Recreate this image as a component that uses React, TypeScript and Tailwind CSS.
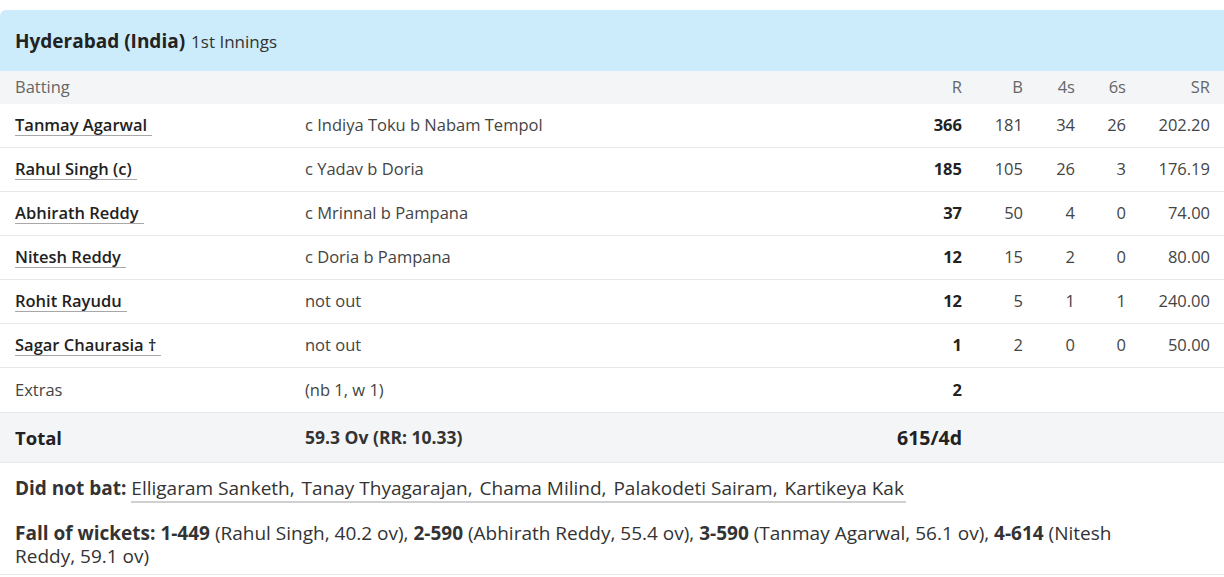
import React from "react";

const rows = [
  { name: "Tanmay Agarwal", how: "c Indiya Toku b Nabam Tempol", r: "366", b: "181", f: "34", s: "26", sr: "202.20" },
  { name: "Rahul Singh (c)", how: "c Yadav b Doria", r: "185", b: "105", f: "26", s: "3", sr: "176.19" },
  { name: "Abhirath Reddy", how: "c Mrinnal b Pampana", r: "37", b: "50", f: "4", s: "0", sr: "74.00" },
  { name: "Nitesh Reddy", how: "c Doria b Pampana", r: "12", b: "15", f: "2", s: "0", sr: "80.00" },
  { name: "Rohit Rayudu", how: "not out", r: "12", b: "5", f: "1", s: "1", sr: "240.00" },
  { name: "Sagar Chaurasia †", how: "not out", r: "1", b: "2", f: "0", s: "0", sr: "50.00" },
];

const dnb = ["Elligaram Sanketh", "Tanay Thyagarajan", "Chama Milind", "Palakodeti Sairam", "Kartikeya Kak"];

function Grid({ children, className = "" }: { children: React.ReactNode; className?: string }) {
  return (
    <div className={"grid grid-cols-[290px_1fr_92px_61px_52px_51px_84px] items-center pl-[15px] pr-[14px] " + className}>
      {children}
    </div>
  );
}

export default function App() {
  return (
    <div className="min-h-[577px] bg-white pt-[10px] text-[#333] text-[16.5px]" style={{ fontFamily: "'Open Sans', 'Noto Sans', sans-serif" }}>
      <div className="rounded-tl-[6px] overflow-hidden">
        <div className="h-[61px] bg-[#cdecfb] flex items-center pl-[15px] pt-[2px]">
          <span className="text-[19px] font-bold text-[#222]">Hyderabad (India)</span>
          <span className="ml-[6px] text-[17px] text-[#333]">1st Innings</span>
        </div>
        <Grid className="h-[33px] bg-[#f4f5f7] text-[#666]">
          <div>Batting</div>
          <div></div>
          <div className="text-right">R</div>
          <div className="text-right">B</div>
          <div className="text-right">4s</div>
          <div className="text-right">6s</div>
          <div className="text-right">SR</div>
        </Grid>
        {rows.map((r) => (
          <Grid key={r.name} className="h-[44px] border-b border-[#e6e8ea]">
            <div>
              <span className="font-semibold text-[#222] border-b border-[#a8a8a8] pr-[5px] leading-[21px] inline-block">{r.name}</span>
            </div>
            <div className="text-[#444]">{r.how}</div>
            <div className="text-right font-bold text-[#222]">{r.r}</div>
            <div className="text-right text-[#444]">{r.b}</div>
            <div className="text-right text-[#444]">{r.f}</div>
            <div className="text-right text-[#444]">{r.s}</div>
            <div className="text-right text-[#444]">{r.sr}</div>
          </Grid>
        ))}
        <Grid className="h-[45px] border-b border-[#e6e8ea]">
          <div className="text-[#444]">Extras</div>
          <div className="text-[#444]">(nb 1, w 1)</div>
          <div className="text-right font-bold text-[#222]">2</div>
          <div></div>
          <div></div>
          <div></div>
          <div></div>
        </Grid>
        <Grid className="h-[50px] bg-[#f4f5f7] border-b border-[#e6e8ea]">
          <div className="text-[18.5px] font-bold text-[#222]">Total</div>
          <div className="font-bold text-[17.5px] text-[#333]">59.3 Ov (RR: 10.33)</div>
          <div className="text-right font-bold text-[19.5px] text-[#222] whitespace-nowrap flex justify-end">615/4d</div>
          <div></div>
          <div></div>
          <div></div>
          <div></div>
        </Grid>
        <div className="pl-[15px] pr-[15px] pt-[13px] pb-[10px] text-[19px] text-[#333] leading-[24px]">
          <span className="font-bold">Did not bat: </span>
          {dnb.map((n, i) => (
            <React.Fragment key={n}>
              <span className="border-b-2 border-[#d0d0d0] pr-[2px]">{n}{i < dnb.length - 1 ? ", " : " "}</span>
              {i < dnb.length - 1 ? " " : ""}
            </React.Fragment>
          ))}
        </div>
        <div className="pl-[15px] pr-[85px] pt-[12px] pb-[6px] text-[19px] leading-[23px] text-[#333] border-b border-[#e6e8ea]">
          <span className="font-bold">Fall of wickets: </span>
          <span className="font-bold">1-449</span> (Rahul Singh, 40.2 ov), <span className="font-bold">2-590</span> (Abhirath Reddy, 55.4 ov),{" "}
          <span className="font-bold">3-590</span> (Tanmay Agarwal, 56.1 ov), <span className="font-bold">4-614</span> (Nitesh Reddy, 59.1 ov)
        </div>
      </div>
    </div>
  );
}
